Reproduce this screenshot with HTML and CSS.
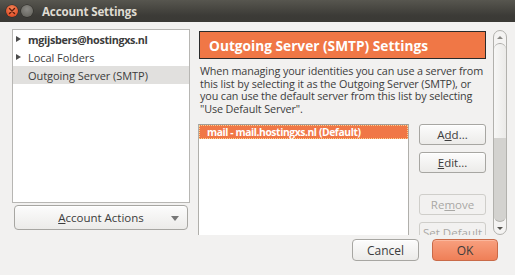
FILE: index.html
```html
<!DOCTYPE html>
<html>
<head>
<meta charset="utf-8">
<link rel="stylesheet" href="styles.css">
</head>
<body>
<div class="window">
  <div class="titlebar">
    <span class="wbtn close"><svg width="8" height="8" viewBox="0 0 8 8"><path d="M1.5 1.5L6.5 6.5M6.5 1.5L1.5 6.5" stroke="#5a1c0c" stroke-width="1.4" stroke-linecap="round"/></svg></span>
    <span class="wbtn min"></span>
    <span class="title">Account Settings</span>
  </div>
  <div class="main">
    <div class="left">
      <div class="tree">
        <div class="row bold"><span class="tri"></span>mgijsbers@hostingxs.nl</div>
        <div class="row"><span class="tri"></span>Local Folders</div>
        <div class="row sel"><span class="tri none"></span>Outgoing Server (SMTP)</div>
      </div>
      <div class="btn actions"><span class="lbl"><u>A</u>ccount Actions</span><span class="drop"></span></div>
    </div>
    <div class="right">
      <div class="pane">
        <div class="header">Outgoing Server (SMTP) Settings</div>
        <p class="desc">When managing your identities you can use a server from this list by selecting it as the Outgoing Server (SMTP), or you can use the default server from this list by selecting "Use Default Server".</p>
        <div class="servers">
          <div class="list">
            <div class="item">mail - mail.hostingxs.nl (Default)</div>
          </div>
          <div class="sbtns">
            <div class="btn">A<u>d</u>d...</div>
            <div class="btn"><u>E</u>dit...</div>
            <div class="btn disabled gap">Re<u>m</u>ove</div>
            <div class="btn disabled">Set Default</div>
          </div>
        </div>
      </div>
      <div class="scrollbar">
        <div class="step"><span class="up"></span></div>
        <div class="thumb"></div>
        <div class="trough"></div>
        <div class="step"><span class="down"></span></div>
      </div>
    </div>
  </div>
  <div class="footer">
    <div class="btn fbtn">Cancel</div>
    <div class="btn fbtn ok">OK</div>
  </div>
</div>
</body>
</html>
```
FILE: styles.css
```css
* { box-sizing: border-box; }
html, body { margin: 0; padding: 0; }
body {
  width: 515px; height: 275px; overflow: hidden;
  font-family: "Open Sans", "Noto Sans", sans-serif;
  font-size: 11px;
  color: #3c3c3c;
  background: #f2f1f0;
}
.window { width: 515px; height: 275px; background: #f2f1f0; display: flex; flex-direction: column; }
.titlebar {
  height: 22px; flex: none;
  background: linear-gradient(#57564f, #3c3b37 70%, #3a3935);
  display: flex; align-items: center; padding-left: 6px;
}
.wbtn { width: 12px; height: 12px; border-radius: 50%; display: flex; align-items: center; justify-content: center; }
.close { background: radial-gradient(circle at 50% 35%, #f78a5b, #e0512b 70%, #b8401f); box-shadow: 0 0 0 0.5px #2a2925; }
.min { margin-left: 3px; background: radial-gradient(circle at 50% 35%, #8b8a85, #6b6a64 70%, #55544f); box-shadow: 0 0 0 0.5px #2a2925; }
.title { margin-left: 9px; color: #dfdbd2; font-weight: bold; font-size: 11.6px; letter-spacing: -0.15px; }

.main { display: flex; padding: 7px 0 0 12px; height: 211px; flex: none; }
.left { width: 178px; display: flex; flex-direction: column; }
.tree { height: 174px; background: #fff; border: 1px solid #b7b6b3; }
.row { height: 18px; display: flex; align-items: center; padding-left: 3px; font-size: 11px; color: #3c3c3c; letter-spacing: -0.05px; }
.row.bold { font-weight: bold; font-size: 10.8px; letter-spacing: -0.35px; }
.row.sel { background: #e1e0de; }
.tri { width: 0; height: 0; border-left: 5px solid #4c4c4c; border-top: 3.5px solid transparent; border-bottom: 3.5px solid transparent; margin-right: 7px; }
.tri.none { border-left-color: transparent; }

.btn {
  display: flex; align-items: center; justify-content: center;
  height: 21px; border: 1px solid #a7a6a2; border-radius: 3px;
  background: linear-gradient(#fcfcfc, #ecebe9);
  font-size: 11.5px; color: #3c3c3c;
  box-shadow: inset 0 1px 0 #fff;
}
.btn u { text-decoration: underline; text-underline-offset: 1px; }
.actions { margin: 2px 2px 0 2px; height: 25px; position: relative; border-radius: 4px; }
.actions .drop { position: absolute; right: 8px; top: 10px; width: 0; height: 0; border-top: 5px solid #777; border-left: 4px solid transparent; border-right: 4px solid transparent; }

.right { margin-left: 8px; display: flex; height: 206px; }
.pane { width: 290px; height: 206px; overflow: hidden; padding-top: 2px; }
.header {
  margin-left: 1px; width: 287px; height: 28px;
  background: #f07746; border: 1px solid #2b2b2b;
  color: #fff; font-weight: bold; font-size: 13.7px;
  display: flex; align-items: center; padding-left: 9px;
}
.desc { margin: 6px 0 0 2px; font-size: 10.8px; line-height: 12.6px; width: 290px; color: #3c3c3c; letter-spacing: -0.12px; }
.servers { display: flex; margin-top: 9px; }
.list { width: 211px; height: 120px; background: #fff; border: 1px solid #b0afab; border-top-color: #a09f9b; }
.item {
  height: 14px; background: #f07746; color: #fff; font-weight: bold; font-size: 10.3px; letter-spacing: -0.4px;
  display: flex; align-items: center; padding-left: 8px;
  outline: 1px dotted #fbd28f; outline-offset: -1px;
}
.sbtns { margin-left: 10px; width: 67px; display: flex; flex-direction: column; gap: 7px; }
.sbtns .btn { height: 21px; flex: none; }
.btn.disabled { color: #a9a8a5; border-color: #cfceca; background: #f2f1f0; box-shadow: none; }
.btn.gap { margin-top: 14px; }

.scrollbar {
  margin-left: 5px; width: 14px; height: 205px; margin-top: 1px;
  border: 1px solid #b2b1ad; border-radius: 7px; background: #f4f3f2;
  display: flex; flex-direction: column; overflow: hidden;
}
.step { height: 12px; flex: none; display: flex; align-items: center; justify-content: center; }
.up { width: 0; height: 0; border-bottom: 3px solid #8a8985; border-left: 3px solid transparent; border-right: 3px solid transparent; }
.down { width: 0; height: 0; border-top: 3px solid #55544f; border-left: 3px solid transparent; border-right: 3px solid transparent; }
.thumb { height: 95px; flex: none; border-top: 1px solid #aaa9a5; border-radius: 6px 6px 0 0; background: linear-gradient(90deg, #f7f7f6, #ebeae8); }
.trough { flex: 1; background: #d3d2cf; border-radius: 0 0 6px 6px; border-bottom: 1px solid #b2b1ad; }

.footer { display: flex; justify-content: flex-end; gap: 13px; padding: 6px 17px 0 0; }
.fbtn { width: 67px; height: 22px; border-radius: 4px; font-size: 12px; }
.ok { width: 66px; background: linear-gradient(#f8a07f, #ef7f57); border-color: #c96a48; box-shadow: inset 0 1px 0 #fbb79d; }
```
